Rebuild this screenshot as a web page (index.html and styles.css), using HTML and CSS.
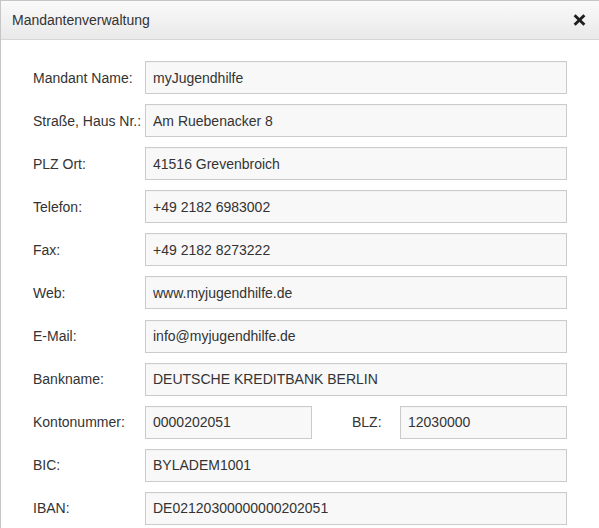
FILE: index.html
```html
<!DOCTYPE html>
<html lang="de">
<head>
<meta charset="utf-8">
<title>Mandantenverwaltung</title>
<link rel="stylesheet" href="styles.css">
</head>
<body>
<div class="dialog">
  <div class="dialog-header">
    <span class="dialog-title">Mandantenverwaltung</span>
    <button class="dialog-close" type="button" aria-label="Schließen">
      <svg width="13" height="12" viewBox="0 0 13 12"><path d="M1.6 1.3 L11.4 10.7 M11.4 1.3 L1.6 10.7" stroke="#1e1e1e" stroke-width="2.9" stroke-linecap="butt"/></svg>
    </button>
  </div>
  <form class="dialog-body">
    <div class="row"><label class="lbl">Mandant Name:</label><input class="field" value="myJugendhilfe"></div>
    <div class="row"><label class="lbl">Straße, Haus Nr.:</label><input class="field" value="Am Ruebenacker 8"></div>
    <div class="row"><label class="lbl">PLZ Ort:</label><input class="field" value="41516 Grevenbroich"></div>
    <div class="row"><label class="lbl">Telefon:</label><input class="field" value="+49 2182 6983002"></div>
    <div class="row"><label class="lbl">Fax:</label><input class="field" value="+49 2182 8273222"></div>
    <div class="row"><label class="lbl">Web:</label><input class="field" value="www.myjugendhilfe.de"></div>
    <div class="row"><label class="lbl">E-Mail:</label><input class="field" value="info@myjugendhilfe.de"></div>
    <div class="row"><label class="lbl">Bankname:</label><input class="field" value="DEUTSCHE KREDITBANK BERLIN"></div>
    <div class="row"><label class="lbl">Kontonummer:</label><input class="field half" value="0000202051"><label class="lbl lbl-inline">BLZ:</label><input class="field half" value="12030000"></div>
    <div class="row"><label class="lbl">BIC:</label><input class="field" value="BYLADEM1001"></div>
    <div class="row"><label class="lbl">IBAN:</label><input class="field" value="DE02120300000000202051"></div>
  </form>
</div>
</body>
</html>
```
FILE: styles.css
```css
html, body {
  margin: 0;
  padding: 0;
  background: #fff;
  overflow: hidden;
}

body {
  font-family: "Liberation Sans", Arial, sans-serif;
  font-size: 14px;
  color: #333;
}

.dialog {
  border-top: 1px solid #c6c6c6;
  border-left: 1px solid #c6c6c6;
  height: 100vh;
  box-sizing: border-box;
}

.dialog-header {
  height: 38px;
  border-bottom: 1px solid #d6d6d6;
  background: linear-gradient(to bottom, #fafafa 0%, #e9e9e9 100%);
  display: flex;
  align-items: center;
  justify-content: space-between;
  padding: 0 13px 0 11px;
}

.dialog-title {
  font-size: 14px;
  color: #333;
}

.dialog-close {
  border: 0;
  background: transparent;
  padding: 0;
  margin: 0;
  width: 13px;
  height: 12px;
  display: flex;
  cursor: pointer;
}

.dialog-body {
  margin: 0;
  padding: 21px 0 0 32px;
}

.row {
  display: flex;
  align-items: center;
  height: 33px;
  margin-bottom: 10.1px;
}

.lbl {
  width: 112px;
  flex: none;
  color: #333;
  white-space: nowrap;
}

.lbl-inline {
  width: 48px;
  margin-left: 40px;
}

.field {
  box-sizing: border-box;
  width: 422px;
  height: 33px;
  margin: 0;
  padding: 0 7px;
  border: 1px solid #cbcbcb;
  border-radius: 0;
  background: #f8f8f8;
  box-shadow: inset 0 1px 0 rgba(0, 0, 0, 0.02);
  font-family: "Liberation Sans", Arial, sans-serif;
  font-size: 14px;
  color: #333;
  outline: none;
}

.field.half {
  width: 167px;
}
```
